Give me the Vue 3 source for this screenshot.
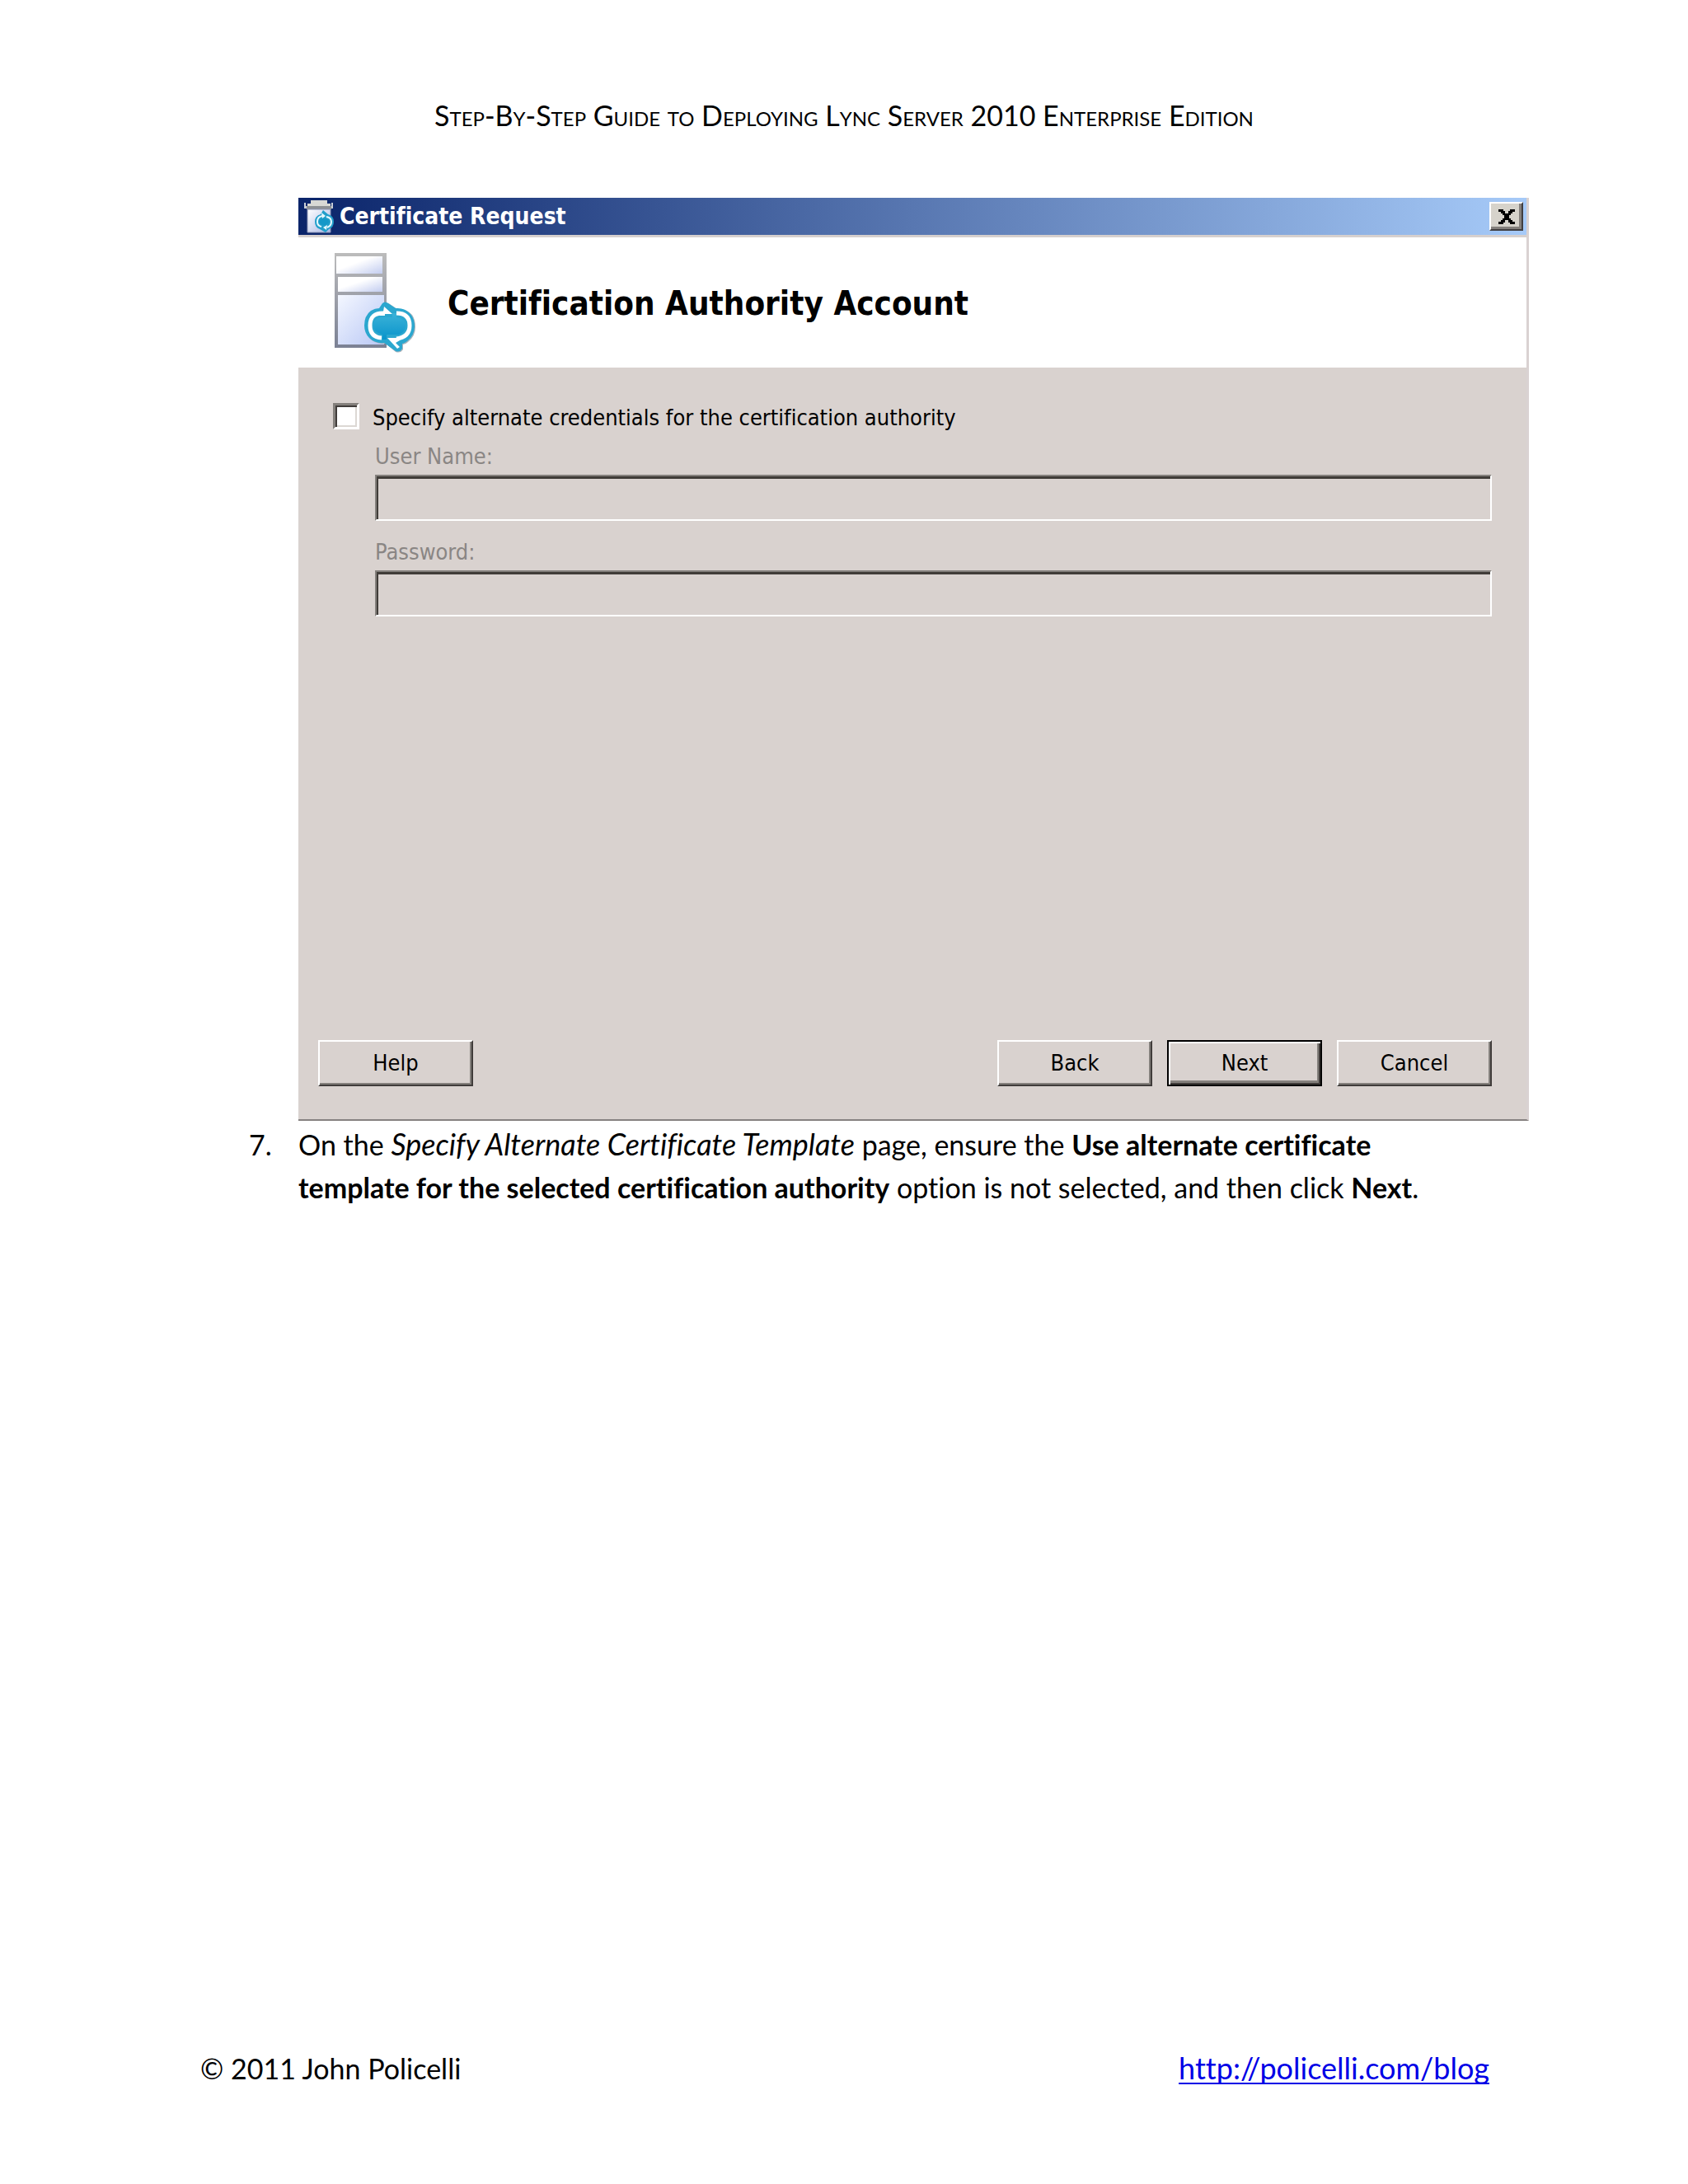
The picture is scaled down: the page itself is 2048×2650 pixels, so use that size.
<script setup>
import { ref } from 'vue'

const useAlternate = ref(false)
const userName = ref('')
const password = ref('')
</script>

<template>
  <div class="page">
    <header class="page-header">Step-By-Step Guide to Deploying Lync Server 2010 Enterprise Edition</header>

    <main class="content">
      <section class="dialog" aria-label="Certificate Request">
        <div class="titlebar">
          <svg class="title-icon" viewBox="0 0 36 42" aria-hidden="true">
            <defs>
              <linearGradient id="smallBody" x1="0" y1="0" x2="1" y2="1">
                <stop offset="0" stop-color="#ffffff" />
                <stop offset="1" stop-color="#a9b6e4" />
              </linearGradient>
            </defs>
            <path d="M0 4H2V8H5V11H0ZM33 4H35V11H30V8H33Z" fill="#c9ced6" />
            <path d="M8 1H28V5H32V10H4V5H8Z" fill="#d8d8d4" />
            <path d="M3 8H33V12H3Z" fill="#8d9094" />
            <path d="M4 12H32V40H4Z" fill="url(#smallBody)" stroke="#8c94b4" />
            <path d="M23 13L29 18Q36 20 36 27Q36 34 30 36L26 40L19 36Q13 34 13 27Q13 20 20 18Z" fill="#229fcb" />
            <path d="M22 20Q16 21 16 27Q16 32 21 33M27 21Q33 22 33 27Q33 32 28 34" fill="none" stroke="#e6f9ff" stroke-width="2" />
            <path d="M21 16L26 20L22 23ZM28 31L23 34L27 37Z" fill="#e6f9ff" />
            <ellipse cx="24" cy="27" rx="6" ry="4" fill="#1598c8" />
          </svg>
          <span class="title-text">Certificate Request</span>
          <button class="close" type="button" aria-label="Close">
            <svg viewBox="0 0 20 18" aria-hidden="true">
              <path d="M0 0H6V2H8V5H12V2H14V0H20V3H17V5H15V7H13V11H15V13H17V15H20V18H14V16H12V13H8V16H6V18H0V15H3V13H5V11H7V7H5V5H3V3H0Z" fill="#000" />
            </svg>
          </button>
        </div>

        <div class="banner">
          <svg class="server-icon" viewBox="0 0 98 122" aria-hidden="true">
            <defs>
              <linearGradient id="bay" x1="0" y1="0" x2="1" y2="1">
                <stop offset="0.4" stop-color="#ffffff" />
                <stop offset="1" stop-color="#c3cdf0" />
              </linearGradient>
              <linearGradient id="tower" x1="0" y1="0" x2="1" y2="1">
                <stop offset="0" stop-color="#f4f7ff" />
                <stop offset="1" stop-color="#b9c8f5" />
              </linearGradient>
              <linearGradient id="frame" x1="0" y1="0" x2="0" y2="1">
                <stop offset="0" stop-color="#bcbcbc" />
                <stop offset="1" stop-color="#7b8194" />
              </linearGradient>
              <linearGradient id="core" x1="0" y1="0" x2="0" y2="1">
                <stop offset="0" stop-color="#3bb2d8" />
                <stop offset="1" stop-color="#0994cb" />
              </linearGradient>
            </defs>
            <rect width="63" height="115" fill="url(#frame)" />
            <rect x="2" y="4" width="56" height="21" fill="url(#bay)" />
            <rect x="4" y="29" width="54" height="18" fill="url(#bay)" />
            <rect x="4" y="51" width="56" height="60" fill="url(#tower)" />
            <path d="M60 62Q64 59 67 62L76 68Q87 67 94 75Q98 81 98 90Q98 101 89 108Q86 111 83 111V117Q80 122 74 120L62 110Q50 111 43 104Q37 97 37 88Q37 77 45 71Q49 68 54 68Z" fill="#a9b4bd" />
            <path d="M58 61Q61 58 65 61L74 67Q85 66 92 74Q97 80 97 89Q97 100 88 107Q84 110 82 110V116Q79 121 74 119L60 109Q49 110 42 103Q36 97 36 88Q36 76 44 70Q49 67 54 67Z" fill="#2ba7cf" />
            <path d="M60 73Q43 72 43 88Q43 102 57 103" fill="none" stroke="#fff" stroke-width="5" />
            <path d="M75 73Q91 73 91 88Q91 102 75 104" fill="none" stroke="#fff" stroke-width="5" />
            <path d="M60 65L70 74H61V76L54 76L59 71ZM64 103H79V106L74 109L79 114L76 116Z" fill="#fff" />
            <path d="M56 78H70V73H75V78Q86 80 86 88Q86 96 78 99H63V105H58V99Q47 96 47 88Q47 80 56 78Z" fill="url(#core)" />
          </svg>
          <h1>Certification Authority Account</h1>
        </div>

        <form class="body" @submit.prevent>
          <label class="check">
            <input v-model="useAlternate" type="checkbox" />
            <span>Specify alternate credentials for the certification authority</span>
          </label>
          <div class="fields">
            <div class="field">
              <label for="user-name">User Name:</label>
              <input id="user-name" v-model="userName" type="text" :disabled="!useAlternate" />
            </div>
            <div class="field">
              <label for="password">Password:</label>
              <input id="password" v-model="password" type="password" :disabled="!useAlternate" />
            </div>
          </div>
          <div class="actions">
            <button class="btn help" type="button">Help</button>
            <button class="btn" type="button">Back</button>
            <button class="btn default" type="submit">Next</button>
            <button class="btn" type="button">Cancel</button>
          </div>
        </form>
      </section>

      <ol class="steps" start="7">
        <li>
          <span class="num">7.</span>
          <p>
            On the <em>Specify Alternate Certificate Template</em> page, ensure the
            <strong>Use alternate certificate<br />template for the selected certification authority</strong>
            option is not selected, and then click <strong>Next</strong>.
          </p>
        </li>
      </ol>
    </main>

    <footer class="page-footer">
      <span>© 2011 John Policelli</span>
      <a href="http://policelli.com/blog">http://policelli.com/blog</a>
    </footer>
  </div>
</template>

<style>
body {
  margin: 0;
  background: #fff;
}
</style>

<style scoped>
.page {
  box-sizing: border-box;
  min-height: 100vh;
  padding: 114px 0;
  display: flex;
  flex-direction: column;
  color: #000;
  background: #fff;
  font-family: Lato, Carlito, Calibri, sans-serif;
  font-size: 34px;
  line-height: 52px;
  font-variant-ligatures: none;
}

.page-header {
  text-align: center;
  font-variant-caps: small-caps;
}

.content {
  margin: 74px 193px 0 302px;
}

.dialog {
  margin-left: 60px;
  border-right: 3px solid #d9d2d2;
  border-bottom: 2px solid #868180;
  background: #d9d2cf;
  font-family: "DejaVu Sans Condensed", Tahoma, sans-serif;
  font-size: 27px;
  line-height: 36px;
}

.titlebar {
  box-sizing: border-box;
  height: 48px;
  padding: 0 4px 0 7px;
  display: flex;
  align-items: center;
  border-bottom: 3px solid #d6d0ce;
  background: linear-gradient(to right, #0a246a, #a6caf8);
}

.title-icon {
  width: 36px;
  height: 42px;
}

.title-text {
  margin-left: 7px;
  flex: 1;
  color: #fff;
  font-size: 28px;
  font-weight: bold;
}

.close {
  box-sizing: border-box;
  width: 41px;
  height: 35px;
  padding: 0;
  display: flex;
  align-items: center;
  justify-content: center;
  border: 2px solid;
  border-color: #fff #403e40 #403e40 #fff;
  box-shadow: inset -3px -3px #84807c;
  background: #d6d3cb;
}

.close svg {
  width: 20px;
  height: 18px;
}

.banner {
  box-sizing: border-box;
  height: 158px;
  padding: 2px 0 0 44px;
  display: flex;
  align-items: center;
  gap: 39px;
  background: #fff;
}

.server-icon {
  width: 98px;
  height: 122px;
}

h1 {
  margin: 0;
  font-size: 40px;
  line-height: 48px;
}

.body {
  box-sizing: border-box;
  min-height: 912px;
  padding: 43px 42px 40px 24px;
  display: flex;
  flex-direction: column;
}

.check {
  margin-left: 18px;
  display: flex;
  align-items: flex-start;
  align-self: flex-start;
  gap: 16px;
}

.check input {
  appearance: none;
  box-sizing: border-box;
  width: 32px;
  height: 32px;
  margin: 0;
  border: 3px solid;
  border-color: #84807c #fff #fff #84807c;
  box-shadow: inset 2px 2px #403c3a, inset -2px -2px #dcd8d4;
  background: #fff;
}

.check input:checked {
  background: #fff linear-gradient(#000, #000) center / 12px 12px no-repeat;
}

.fields {
  margin: 11px 0 0 69px;
  display: flex;
  flex-direction: column;
  gap: 20px;
}

.field {
  display: flex;
  flex-direction: column;
  gap: 4px;
  color: #8a8684;
}

.field label {
  align-self: flex-start;
}

.field input {
  box-sizing: border-box;
  width: 100%;
  height: 56px;
  padding: 0 12px;
  border: 2px solid;
  border-color: #84807c #fff #fff #84807c;
  box-shadow: inset 2px 3px #403c38;
  background: transparent;
  font: inherit;
}

.actions {
  margin-top: auto;
  display: flex;
  gap: 18px;
}

.btn {
  box-sizing: border-box;
  width: 188px;
  height: 56px;
  padding: 0;
  border: 2px solid;
  border-color: #fff #403c3a #403c3a #fff;
  box-shadow: inset -2px -2px #84807c;
  background: #d9d2cf;
  color: #000;
  font: inherit;
}

.help {
  margin-right: auto;
}

.default {
  border-color: #000;
  box-shadow: inset 2px 2px #fff, inset -2px -2px #403c3a, inset -4px -5px #84807c;
}

.steps {
  margin: 3px 0 0;
  padding: 0;
  list-style: none;
}

.steps li {
  display: flex;
}

.num {
  width: 60px;
  flex: none;
}

.steps p {
  margin: 0;
}

em {
  font-size: 36px;
  line-height: 36px;
}

.page-footer {
  margin: auto 241px 0 243px;
  display: flex;
  justify-content: space-between;
  align-items: baseline;
}

a {
  color: #0000e6;
  font-size: 36px;
  line-height: 36px;
  text-decoration: underline;
  text-decoration-thickness: 2px;
  text-underline-offset: 4px;
  text-decoration-skip-ink: none;
}
</style>
